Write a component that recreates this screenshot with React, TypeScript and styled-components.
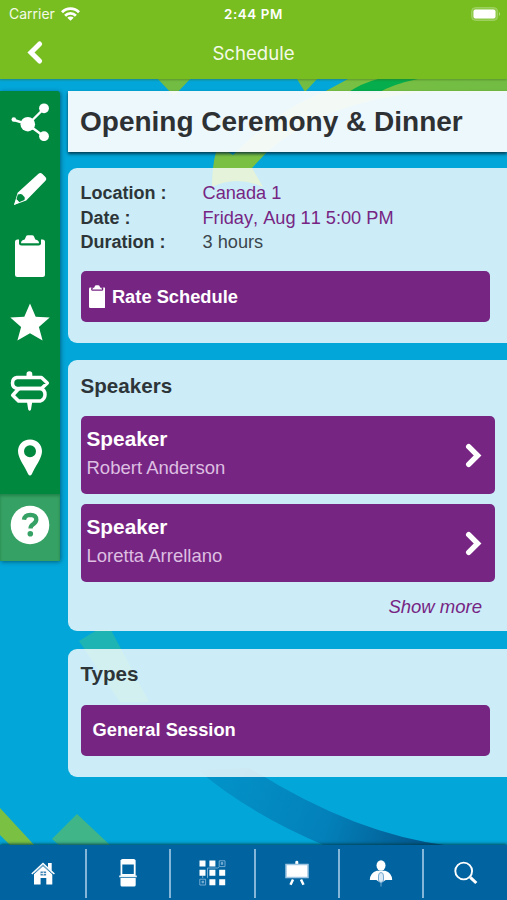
import React from "react";
import styled, { createGlobalStyle } from "styled-components";

const Global = createGlobalStyle`
  * { box-sizing: border-box; }
  html, body { margin: 0; padding: 0; }
  body { font-family: "Liberation Sans", Arial, sans-serif; overflow: hidden; }
`;

const Screen = styled.div`
  position: relative;
  width: 507px;
  height: 900px;
  display: flex;
  flex-direction: column;
  overflow: hidden;
  background: #03a6d9;
`;

const Backdrop = styled.svg`
  position: absolute;
  inset: 0;
  width: 507px;
  height: 900px;
`;

const Header = styled.header`
  position: relative;
  flex: none;
  height: 79px;
  background: #78be20;
  color: #fff;
  font-family: Inter, sans-serif;
  box-shadow: 0 1px 2px rgba(60, 100, 20, 0.45);
`;

const StatusBar = styled.div`
  display: grid;
  grid-template-columns: 1fr auto 1fr;
  align-items: center;
  height: 27px;
  padding: 0 6px 0 9px;
  font-size: 14px;
`;

const Carrier = styled.div`
  display: flex;
  align-items: center;
  gap: 6px;
  color: #f4fae8;
`;

const Clock = styled.div`
  margin-right: 3px;
  font-weight: 600;
  font-size: 13.4px;
  letter-spacing: 0.6px;
`;

const BatterySlot = styled.div`
  display: flex;
  justify-content: flex-end;
`;

const NavBar = styled.div`
  display: grid;
  grid-template-columns: 80px 1fr 80px;
  align-items: center;
  height: 51px;
`;

const BackButton = styled.button`
  display: flex;
  width: 40px;
  margin: 0 0 1px 20px;
  padding: 0 0 0 6.5px;
  border: 0;
  background: none;
`;

const NavTitle = styled.div`
  text-align: center;
  font-size: 18.6px;
  color: #f4fae8;
`;

const Body = styled.main`
  position: relative;
  flex: 1;
  display: flex;
  align-items: flex-start;
  gap: 8px;
  padding-top: 12px;
`;

const SideBar = styled.nav`
  flex: none;
  width: 60px;
  background: #00883e;
  border-radius: 0 3px 3px 0;
  box-shadow: 1px 1px 4px rgba(0, 50, 70, 0.6);
`;

const SideItem = styled.div<{ $active?: boolean }>`
  display: flex;
  align-items: center;
  justify-content: center;
  height: 67.2px;
  padding-bottom: 5.5px;
  background: ${(p) => (p.$active ? "#36a164" : "transparent")};
  box-shadow: ${(p) => (p.$active ? "inset 0 2px 3px rgba(0,90,40,.4)" : "none")};
`;

const Content = styled.div`
  flex: 1;
  display: flex;
  flex-direction: column;
`;

const TitleCard = styled.h1`
  margin: 0 0 16px;
  height: 61px;
  padding-left: 12px;
  line-height: 62px;
  font-size: 28px;
  font-weight: 700;
  color: #2d3134;
  background: rgba(250, 252, 255, 0.95);
  box-shadow: 0 2px 3px rgba(0, 35, 50, 0.8);
`;

const Card = styled.section<{ $height: number; $top: number }>`
  height: ${(p) => p.$height}px;
  margin-bottom: 17.3px;
  padding: ${(p) => p.$top}px 12px 0 12.5px;
  border-radius: 9px 0 0 9px;
  background: rgba(255, 255, 255, 0.8);
  color: #2d3538;
`;

const Details = styled.dl`
  display: grid;
  grid-template-columns: 122px 1fr;
  margin: 0 0 16.7px;
  font-size: 18px;
  line-height: 24.4px;
`;

const Label = styled.dt`
  font-weight: 700;
`;

const Value = styled.dd<{ $link?: boolean }>`
  margin: 0;
  font-size: 18.2px;
  font-kerning: none;
  color: ${(p) => (p.$link ? "#772583" : "#3b464c")};
`;

const Heading = styled.h2`
  margin: 0;
  height: 42.5px;
  font-size: 20.6px;
  line-height: 24px;
`;

const ActionButton = styled.div<{ $indent: number }>`
  display: flex;
  align-items: center;
  gap: 7px;
  width: 409.5px;
  height: 51px;
  padding-left: ${(p) => p.$indent}px;
  border-radius: 5px;
  background: #772583;
  color: #fff;
  font-size: 18.3px;
  font-weight: 700;
`;

const SpeakerRow = styled.div`
  display: flex;
  align-items: center;
  justify-content: space-between;
  height: 78px;
  margin-bottom: 10px;
  padding: 0 13.5px 0 6px;
  border-radius: 5px;
  background: #772583;
`;

const SpeakerText = styled.div`
  height: 60px;
`;

const SpeakerRole = styled.div`
  font-size: 20.8px;
  line-height: 27px;
  font-weight: 700;
  color: #fff;
`;

const SpeakerName = styled.div`
  font-size: 18.5px;
  line-height: 31px;
  color: #ddbfe1;
`;

const ShowMore = styled.div`
  padding: 5px 13px 0 0;
  margin-top: 10px;
  text-align: right;
  font-size: 18.5px;
  line-height: 20px;
  font-style: italic;
  color: #772583;
`;

const TabBar = styled.footer`
  position: relative;
  flex: none;
  display: grid;
  grid-template-columns: 87px repeat(4, 84.3px) 1fr;
  height: 55px;
  padding: 4px 0 2px;
  background: #01639f;
  box-shadow: 0 -1px 3px rgba(0, 60, 70, 0.9);
`;

const Tab = styled.div`
  display: flex;
  align-items: center;
  justify-content: center;
  padding-bottom: 1px;
  border-right: 2px solid #84b6d9;
  &:last-child { border-right: 0; }
`;

const WifiIcon = () => (
  <svg width="19" height="14" viewBox="0 0 19 14" fill="none" stroke="#fff" strokeWidth="2.8">
    <path d="M1 5.200a12 12 0 0 1 17 0" />
    <path d="M4.100 8.700a7.600 7.600 0 0 1 10.800 0" />
    <path d="M9.500 13.700 6.300 10.800a4.600 4.600 0 0 1 6.400 0Z" fill="#fff" stroke="none" />
  </svg>
);

const BatteryIcon = () => (
  <svg width="31" height="14" viewBox="0 0 31 14">
    <rect x="1.600" y=".6" width="26" height="12.800" rx="3.800" fill="#8fca49" stroke="#a0d264" strokeWidth="1" />
    <rect x="3.500" y="2.600" width="22" height="8.800" rx="2" fill="#fff" />
    <path d="M29 5q2 2 0 4z" fill="#b4dc85" />
  </svg>
);

const Chevron = ({ left }: { left?: boolean }) => (
  <svg width="17" height="25" viewBox="0 0 17 25" fill="none" stroke="#fff" strokeWidth={left ? 5 : 5.4}>
    <path d={left ? "M12.600 4 4 12.500 12.600 21" : "M3.700 3.700 12.600 12.500 3.700 21.300"} strokeLinecap="round" />
  </svg>
);

const ShareIcon = () => (
  <svg width="40" height="38" viewBox="0 0 40 38" fill="#fff" stroke="#fff">
    <path d="M4 17 18 21.500 34 5.500M18 21.500 34 33.500" strokeWidth="2.400" fill="none" />
    <circle cx="17.800" cy="21.200" r="7.300" stroke="none" />
    <circle cx="34" cy="5.300" r="4.900" stroke="none" />
    <circle cx="34" cy="33.200" r="4.900" stroke="none" />
    <circle cx="3.800" cy="16.500" r="2.300" stroke="none" />
  </svg>
);

const PencilIcon = () => (
  <svg width="34" height="34" viewBox="0 0 34 34" fill="#fff">
    <path d="M25.200 1.900q2.200-2 4.200 0l3 3.200q1.800 2-.2 3.900L13.200 28.600 1 33 4.600 20.800Z" />
    <path d="M4.800 22.600q4.100-1.800 5.700 1.400 2 1 .9 4L6 30.200 3.400 27.300Z" fill="#00883e" />
    <path d="m3.400 27.300 3 3L1 33Z" />
  </svg>
);

const ClipboardIcon = ({ size = 42, hole = "#00883e" }: { size?: number; hole?: string }) => (
  <svg width={(size * 30) / 42} height={size} viewBox="0 0 30 42" fill="#fff">
    <rect y="4.500" width="30" height="37.500" rx="2.500" />
    <path d="M4 4v4.200q0 2.300 2.400 2.300h17.200q2.400 0 2.400-2.300V4Z" fill={hole} />
    <path d="M6 8.200q0-3.200 3.700-3.700L11 1.500Q11.400.3 13 .3h4q1.600 0 2 1.200l1.300 3q3.700.5 3.700 3.700Z" />
  </svg>
);

const StarIcon = () => (
  <svg width="40" height="40" viewBox="0 0 40 40" fill="#fff">
    <path d="m20 .5 5.700 13.200 14 .9-10.800 9.300 3.700 13.700L20 30.200 7.400 37.600l3.700-13.700L.3 14.600l14-.9Z" />
  </svg>
);

const SignpostIcon = () => (
  <svg width="40" height="40" viewBox="0 0 40 40" fill="none" stroke="#fff" strokeWidth="3.500" strokeLinejoin="round">
    <path d="M16.500 5V3q0-2.700 2.900-2.700T22.300 3v2ZM17 31h5.200L21 38.500q-1.400 2.400-2.800 0Z" fill="#fff" stroke="none" />
    <path d="M7 6.500H31.500l5.800 5.500-5.800 5.500H7q-4.500-.8-4.500-5.500T7 6.500Z" />
    <path d="M30.500 17.500q4.500 1.300 4.500 6t-4.500 6.500H8.500l-5.800-5.800L7.500 19q1.300-1.500 3-1.500Z" />
  </svg>
);

const PinIcon = () => (
  <svg width="26" height="37" viewBox="0 0 26 37">
    <path fillRule="evenodd" fill="#fff" d="M13 .5C5.700.5 1 6 1 12.300c0 7 7.200 15.700 10.200 22.900q1.800 2.700 3.600 0C17.800 28 25 19.300 25 12.300 25 6 20.300.5 13 .5Zm0 5.700a6 6 0 1 1 0 12 6 6 0 0 1 0-12Z" />
  </svg>
);

const HelpIcon = () => (
  <svg width="40" height="40" viewBox="0 0 40 40">
    <circle cx="20" cy="20" r="19.300" fill="#fff" />
    <path d="M14 14.800q.6-5 6.300-5 6 .2 6 4.800 0 2.500-3 4.500-2.800 1.600-2.800 4.500" fill="none" stroke="#36a164" strokeWidth="4.300" />
    <circle cx="20.300" cy="28.800" r="2.800" fill="#36a164" />
  </svg>
);

const HomeIcon = () => (
  <svg width="24" height="24" viewBox="0 0 24 24">
    <path d="M17 2h3.700v8L17 6.500ZM3 12 12 4l9.300 8v11.500h-6V17H9.600v6.500H3Z" fill="#fff" />
    <path d="M.8 13 12 2.500 23.400 13" fill="none" stroke="#fff" strokeWidth="1.500" />
    <path d="M1.800 14 12 4.700 22.400 14" fill="none" stroke="#01639f" strokeWidth=".8" />
    <path d="M9.500 10.500h5.600v4H9.500Z" fill="#3f83b5" />
    <path d="M12.300 10.500v4M9.500 12.500h5.600" stroke="#fff" strokeWidth=".8" />
  </svg>
);

const BoothIcon = () => (
  <svg width="18" height="28" viewBox="0 0 18 28">
    <path d="M1.500 1.500Q2 0 3.500 0h11.300q1.500 0 1.800 1.500V17h-15Z" fill="#fff" />
    <path d="M3.300 5.500h11.500V15H3.300Z" fill="#01639f" />
    <path d="M.2 16.500h17.600v1.800H.2Z" fill="#e8f2f9" />
    <path d="M1.500 19h15.200v7q0 1.500-1.500 1.500H3q-1.500 0-1.500-1.500Z" fill="#fff" />
  </svg>
);

const GridIcon = () => (
  <svg width="27" height="26" viewBox="0 0 27 26">
    <path d="M.5.500h6v6h-6zM10.400.500h6v6h-6zM.5 9.700h6v6h-6zM10.400 9.700h6v6h-6zM20.200 9.700h6v6h-6zM10.400 19.200h6v6h-6zM20.200 19.200h6v6h-6z" fill="#fff" />
    <g fill="none" stroke="#76acd3">
      <path d="M20.200.8h5.800v5.800h-5.800ZM.8 19.200h5.800V25H.8ZM3.700 18v-2M8 17.800h.5V8h10.200L20 7" />
      <path d="m22 2.500 2 2m0-2-2 2M2.800 21l2 2m0-2-2 2" strokeWidth="1.500" />
    </g>
  </svg>
);

const EaselIcon = () => (
  <svg width="24" height="26" viewBox="0 0 24 26">
    <path d="M10.300 4V2q0-1.300 1.500-1.300t1.500 1.300v2Z" fill="#fff" />
    <path d="M1 4.500h22v13H1Z" fill="#fff" stroke="#9fc5e2" strokeWidth="1.500" />
    <path d="m8 19.500-2.500 5.300m10.500-5.300 2.500 5.300" stroke="#fff" strokeWidth="2.500" />
  </svg>
);

const SpeakerIcon = () => (
  <svg width="24" height="27" viewBox="0 0 24 27">
    <ellipse cx="12" cy="5.500" rx="4.500" ry="5.200" fill="#fff" />
    <path d="M.8 20q.5-7.500 7-9.200h8.400q6.500 1.700 7 9.200h-6.500L12 23l-4.700-3Z" fill="#fff" />
    <path d="M9.500 16q0-3.500 2.500-3.500t2.500 3.500v4q0 2-2.500 2.500-2.500-.5-2.500-2.500ZM12 22v4.500" fill="#d9e9f6" stroke="#75aad2" />
  </svg>
);

const SearchIcon = () => (
  <svg width="24" height="24" viewBox="0 0 24 24" fill="none" stroke="#fff">
    <circle cx="9.700" cy="10" r="8.400" strokeWidth="1.900" />
    <path d="m16.300 16.300 6 5.700" strokeWidth="3.100" />
  </svg>
);

const sideIcons = [ShareIcon, PencilIcon, ClipboardIcon, StarIcon, SignpostIcon, PinIcon];
const tabIcons = [HomeIcon, BoothIcon, GridIcon, EaselIcon, SpeakerIcon, SearchIcon];

export default function App() {
  return (
    <>
      <Global />
      <Screen>
        <Backdrop viewBox="0 0 507 900">
          <defs>
            <linearGradient id="swoosh" x1="200" y1="770" x2="440" y2="850" gradientUnits="userSpaceOnUse">
              <stop offset="0" stopColor="#0295ca" />
              <stop offset=".55" stopColor="#0380b9" />
              <stop offset="1" stopColor="#034f85" />
            </linearGradient>
            <linearGradient id="arrow" x1="507" y1="90" x2="300" y2="110" gradientUnits="userSpaceOnUse">
              <stop offset="0" stopColor="#72bc44" />
              <stop offset="1" stopColor="#7ac143" />
            </linearGradient>
          </defs>
          <path d="M156 77h36l-18 19Z" fill="#72bc44" />
          <path d="M297 79h20l-12 13Z" fill="#72bc44" />
          <path d="M324 92 348 79H507v13H425Q325 101 267 152L252 168l11 19q-27-12-51 0 0-20 4-35l11-1 6 4Q279 108 324 92Z" fill="url(#arrow)" />
          <path d="M347 93Q362 83 378 79h40q-25 5-40 14Z" fill="#05ad4d" />
          <path d="m79 641 18-11h14l38 72H120Z" fill="#1eb4b3" />
          <path d="M198 770q50 43 128 76h125Q355 835 250 768Z" fill="url(#swoosh)" />
          <path d="M0 808 36 847H12L0 835Z" fill="#7ac143" />
          <path d="m77 814 34 32H60l-8-7Z" fill="#40b588" />
        </Backdrop>
        <Header>
          <StatusBar>
            <Carrier>Carrier <WifiIcon /></Carrier>
            <Clock>2:44 PM</Clock>
            <BatterySlot><BatteryIcon /></BatterySlot>
          </StatusBar>
          <NavBar>
            <BackButton aria-label="Back"><Chevron left /></BackButton>
            <NavTitle>Schedule</NavTitle>
          </NavBar>
        </Header>
        <Body>
          <SideBar>
            {sideIcons.map((Icon, i) => (
              <SideItem key={i}><Icon /></SideItem>
            ))}
            <SideItem $active><HelpIcon /></SideItem>
          </SideBar>
          <Content>
            <TitleCard>Opening Ceremony &amp; Dinner</TitleCard>
            <Card $height={175} $top={13.1}>
              <Details>
                <Label>Location :</Label><Value $link>Canada 1</Value>
                <Label>Date :</Label><Value $link>Friday, Aug 11 5:00 PM</Value>
                <Label>Duration :</Label><Value>3 hours</Value>
              </Details>
              <ActionButton $indent={8}>
                <ClipboardIcon size={23} hole="#772583" />
                Rate Schedule
              </ActionButton>
            </Card>
            <Card $height={271} $top={13.5}>
              <Heading>Speakers</Heading>
              {["Robert Anderson", "Loretta Arrellano"].map((name) => (
                <SpeakerRow key={name}>
                  <SpeakerText>
                    <SpeakerRole>Speaker</SpeakerRole>
                    <SpeakerName>{name}</SpeakerName>
                  </SpeakerText>
                  <Chevron />
                </SpeakerRow>
              ))}
              <ShowMore>Show more</ShowMore>
            </Card>
            <Card $height={128} $top={13.5}>
              <Heading>Types</Heading>
              <ActionButton $indent={12}>General Session</ActionButton>
            </Card>
          </Content>
        </Body>
        <TabBar>
          {tabIcons.map((Icon, i) => (
            <Tab key={i}><Icon /></Tab>
          ))}
        </TabBar>
      </Screen>
    </>
  );
}
